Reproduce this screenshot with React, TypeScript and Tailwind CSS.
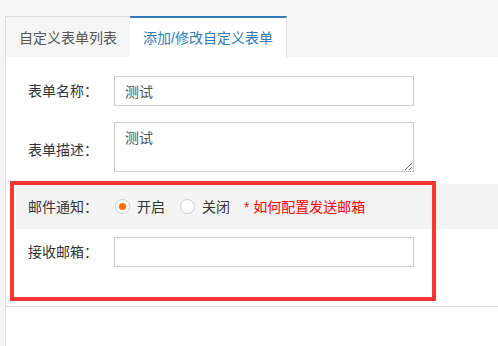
import { ReactNode } from 'react';

const font = { fontFamily: '"Liberation Sans", "Noto Sans CJK SC", sans-serif' };

function Row({ label, children, className = '', labelClass = '' }: { label: string; children: ReactNode; className?: string; labelClass?: string }) {
  return (
    <div className={`flex items-center ${className}`}>
      <div className={`w-[98px] pl-3 text-sm text-[#333] shrink-0 ${labelClass}`}>{label}</div>
      {children}
    </div>
  );
}

function Radio({ checked, label }: { checked?: boolean; label: string }) {
  return (
    <label className="flex items-center gap-[7px] text-sm text-[#333]">
      <span className="w-[15px] h-[15px] rounded-full border border-[#ccc] bg-white flex items-center justify-center">
        {checked && <span className="w-[7px] h-[7px] rounded-full bg-[#ff6a00]" />}
      </span>
      {label}
    </label>
  );
}

export default function App() {
  return (
    <div className="relative w-[498px] h-[346px] overflow-hidden bg-[#f5f5f5] pt-4 pl-[5px] flex flex-col" style={font}>
      {/* tabs */}
      <div className="flex border-b border-[#ddd] h-[42px] shrink-0">
        <div className="h-[42px] px-[13px] flex items-center border-t border-l border-r border-[#ddd] bg-[#f5f5f5] text-sm text-[#555]">
          自定义表单列表
        </div>
        <div className="h-[42px] px-[13px] -ml-px flex items-center border-t-2 border-t-[#337ab7] border-r border-r-[#ddd] bg-white text-sm text-[#337ab7] relative z-10">
          添加/修改自定义表单
        </div>
      </div>

      {/* panel */}
      <div className="flex-1 bg-white border-l border-[#ddd] -mt-px">
        <div className="pl-[10px] pt-[19px] pb-[39px] border-b border-[#ddd]">
          <Row label="表单名称：">
            <input
              defaultValue="测试"
              className="w-[300px] h-[30px] border border-[#ccc] px-[10px] text-sm text-[#555] outline-none"
            />
          </Row>
          <Row label="表单描述：" className="mt-[16px]" labelClass="pt-[6px]">
            <textarea
              defaultValue="测试"
              className="w-[300px] h-[50px] border border-[#ccc] px-[10px] py-[5px] text-sm text-[#555] outline-none resize-y"
            />
          </Row>
          <Row label="邮件通知：" className="mt-[12px] h-[45px] bg-[#f4f4f4]">
            <div className="flex items-center gap-[15px] pl-[1px]">
              <Radio checked label="开启" />
              <Radio label="关闭" />
              <span className="ml-[-1px] text-sm text-[#f00]">* 如何配置发送邮箱</span>
            </div>
          </Row>
          <Row label="接收邮箱：" className="mt-[8px]">
            <input className="w-[300px] h-[30px] border border-[#ccc] px-[10px] text-sm text-[#555] outline-none" />
          </Row>
        </div>
      </div>

      {/* annotation box */}
      <div className="absolute left-[10px] top-[181px] w-[426px] h-[120px] border-4 border-[#fc3535] pointer-events-none" />
    </div>
  );
}
